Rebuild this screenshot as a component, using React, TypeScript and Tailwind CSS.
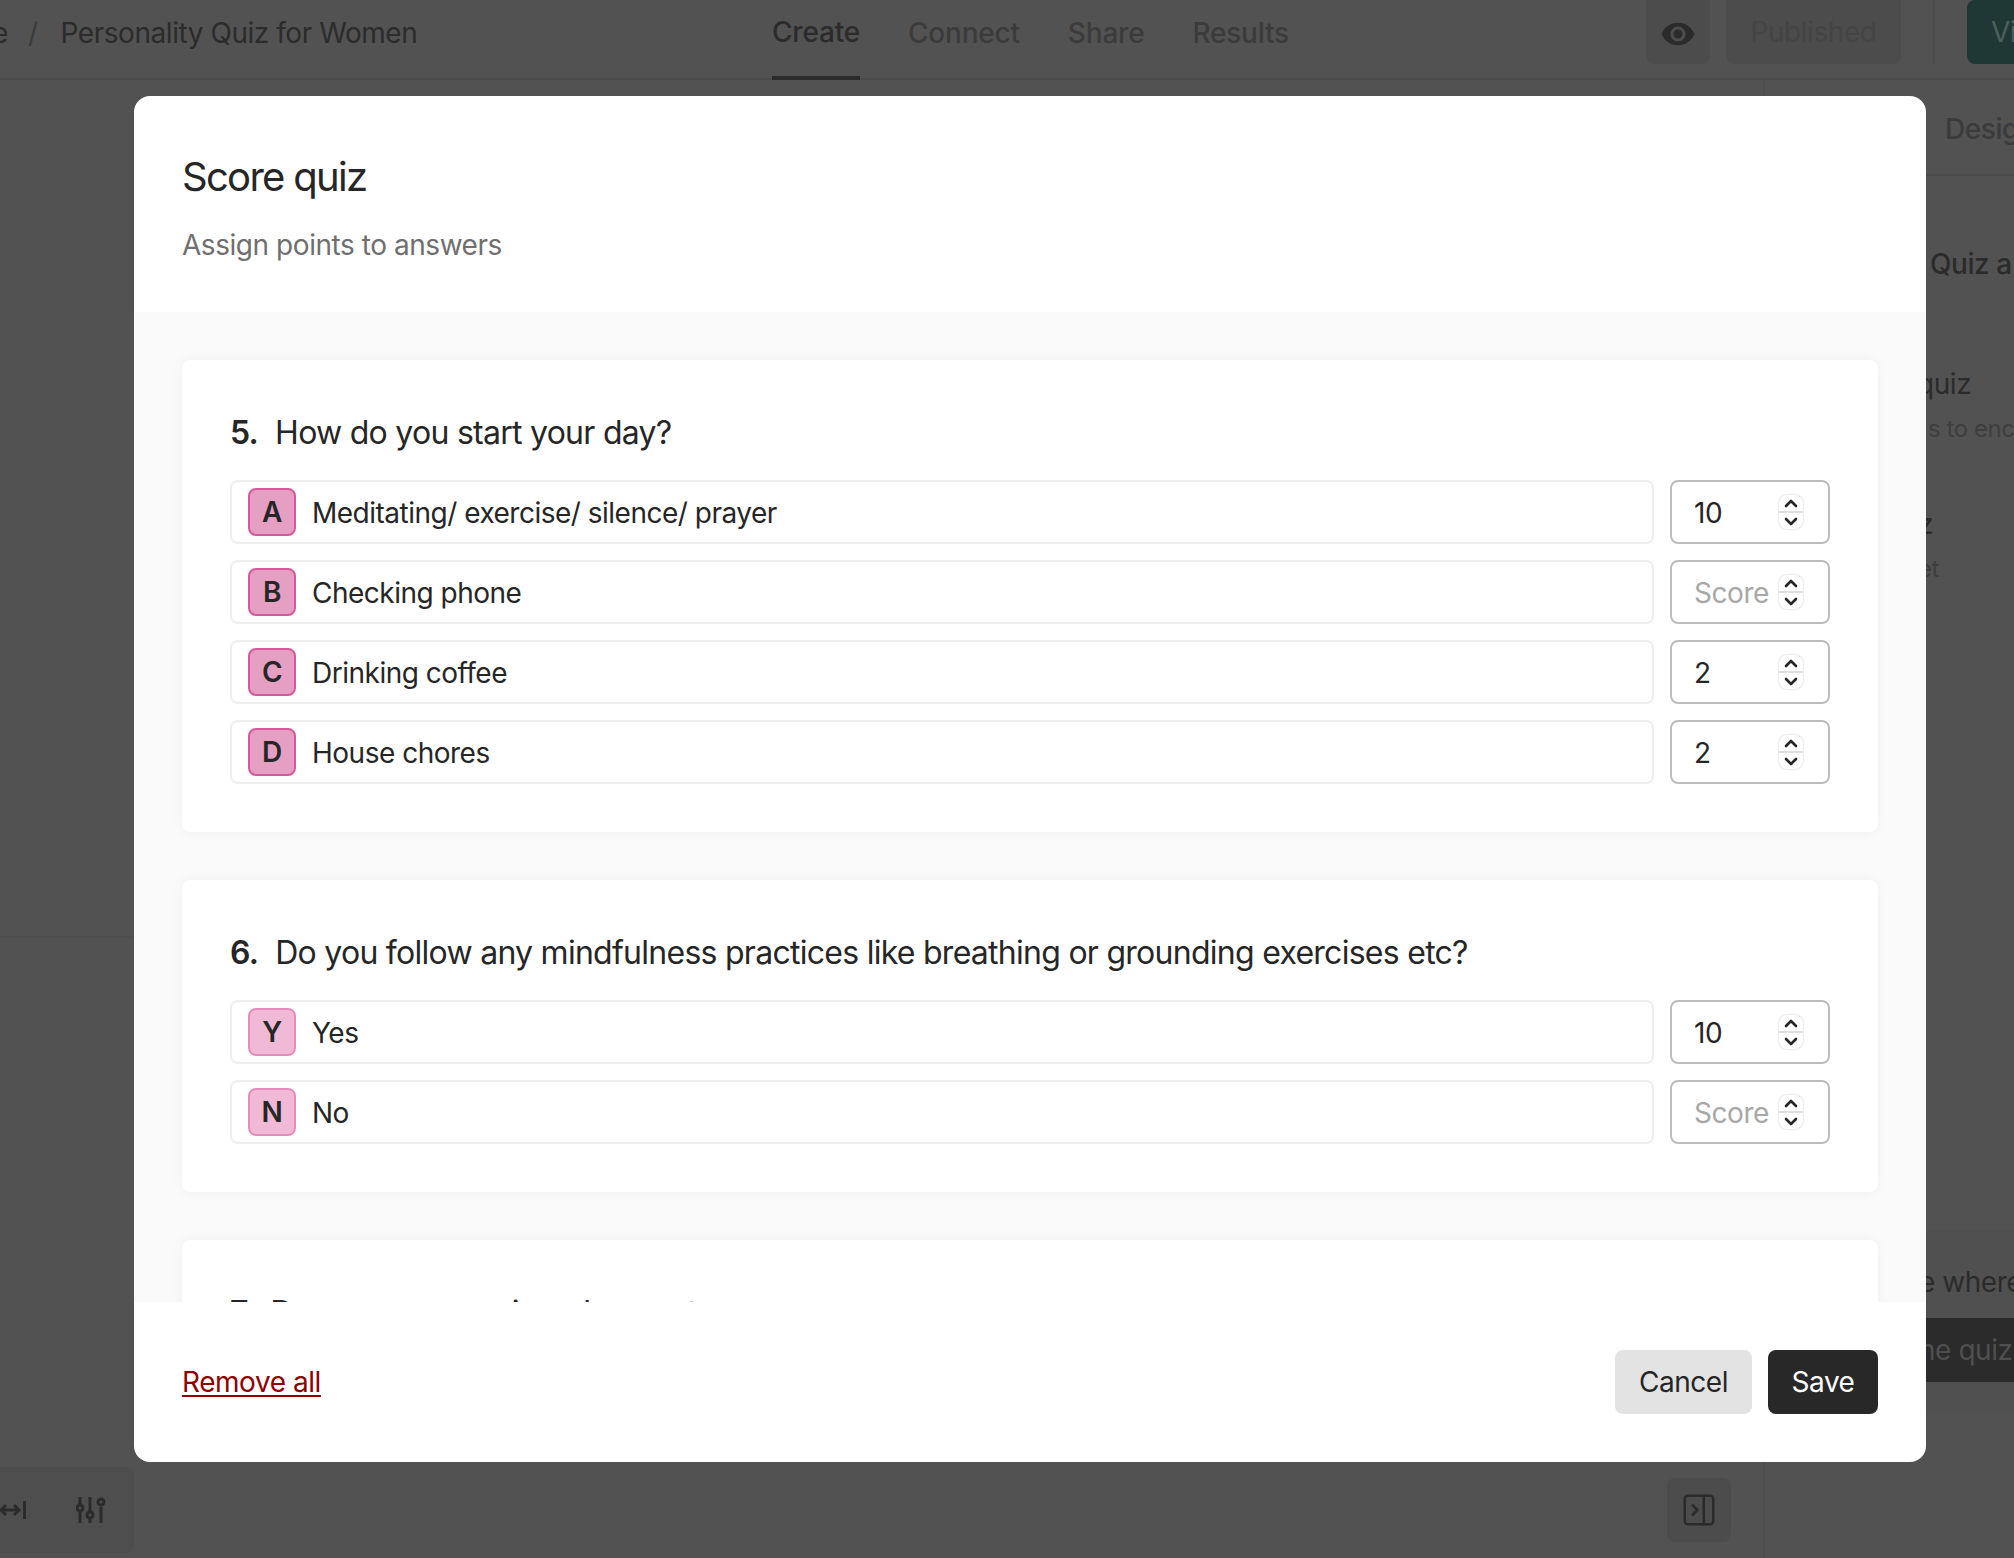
import { PanelRightClose } from "lucide-react"

const font = "font-['Inter','Liberation_Sans',sans-serif]"

type Answer = { key: string; label: string; score?: string }

const q5: Answer[] = [
  { key: "A", label: "Meditating/ exercise/ silence/ prayer", score: "10" },
  { key: "B", label: "Checking phone" },
  { key: "C", label: "Drinking coffee", score: "2" },
  { key: "D", label: "House chores", score: "2" },
]

const q6: Answer[] = [
  { key: "Y", label: "Yes", score: "10" },
  { key: "N", label: "No" },
]

function Stepper() {
  return (
    <div className="flex h-[34px] w-[24px] shrink-0 flex-col rounded-[8px] bg-white shadow-[0_0_2px_rgba(0,0,0,0.25)]">
      <div className="flex flex-1 items-center justify-center border-b-2 border-[#dedede]">
        <svg width="14" height="9" viewBox="0 0 14 9" fill="none" stroke="#262626" strokeWidth="2.6" strokeLinecap="round" strokeLinejoin="round">
          <path d="M2 7l5-5 5 5" />
        </svg>
      </div>
      <div className="flex flex-1 items-center justify-center">
        <svg width="14" height="9" viewBox="0 0 14 9" fill="none" stroke="#262626" strokeWidth="2.6" strokeLinecap="round" strokeLinejoin="round">
          <path d="M2 2l5 5 5-5" />
        </svg>
      </div>
    </div>
  )
}

function AnswerRow({ answer, light }: { answer: Answer; light?: boolean }) {
  return (
    <div className="flex gap-4">
      <div className="flex h-16 flex-1 items-center gap-4 rounded-[8px] border-2 border-[#eeeeee] pl-4">
        <div
          className={`flex h-12 w-12 items-center justify-center rounded-[8px] border-2 text-[28px] font-semibold text-[#262626] ${
            light ? "border-[#e38dbb] bg-[#f0b9d5]" : "border-[#d6589b] bg-[#e59fc3]"
          }`}
        >
          {answer.key}
        </div>
        <span className="pt-px text-[28px] tracking-[-0.5px] text-[#262626]">{answer.label}</span>
      </div>
      <div className="flex h-16 w-40 items-center justify-between rounded-[8px] border-2 border-[#bdbdbd] pl-[22px] pr-[25px]">
        {answer.score ? (
          <span className="pt-px text-[28px] text-[#262626]">{answer.score}</span>
        ) : (
          <span className="pt-[2px] text-[28px] text-[#a8a8a8]">Score</span>
        )}
        <Stepper />
      </div>
    </div>
  )
}

function QuestionCard({ num, title, answers, light }: { num: string; title: string; answers: Answer[]; light?: boolean }) {
  return (
    <div className="flex shrink-0 flex-col gap-4 rounded-[8px] bg-white p-12 shadow-[0_0_12px_rgba(0,0,0,0.05)]">
      <h3 className="mb-[6px] flex h-[50px] items-center gap-[17px] text-[32px] tracking-[-0.73px] text-[#262626]">
        <span className="font-semibold">{num}</span>
        <span>{title}</span>
      </h3>
      {answers.map((a) => (
        <AnswerRow key={a.key} answer={a} light={light} />
      ))}
    </div>
  )
}

function TopBar() {
  return (
    <header className="flex h-20 items-start justify-between border-b-2 border-[#4b4b4b]">
      <div className="flex h-[66px] w-[772px] items-center text-[28px] text-[#2b2b2b]">
        <span className="-ml-[8px] text-[#2b2b2b]">e</span>
        <span className="ml-[20px] text-[#3a3a3a]">/</span>
        <span className="ml-[23px]">Personality Quiz for Women</span>
      </div>
      <nav className="flex h-20 gap-12 text-[28px] font-medium tracking-[-0.2px] text-[#3b3b3b]">
        <span className="flex h-20 items-center border-b-4 border-[#2b2b2b] pb-[12px] text-[#2b2b2b]">Create</span>
        <span className="flex h-20 items-center pb-[14px]">Connect</span>
        <span className="flex h-20 items-center pb-[14px]">Share</span>
        <span className="flex h-20 items-center pb-[14px]">Results</span>
      </nav>
      <div className="flex h-16 flex-1 justify-end">
        <div className="flex h-16 w-16 items-center justify-center rounded-b-[8px] bg-[#4c4c4c] pt-[3px]">
          <svg width="36" height="36" viewBox="0 0 24 24" fill="#2b2b2b">
            <path d="M12 4.5C7 4.5 2.73 7.61 1 12c1.73 4.39 6 7.5 11 7.5s9.27-3.11 11-7.5c-1.73-4.39-6-7.5-11-7.5zM12 17c-2.76 0-5-2.24-5-5s2.24-5 5-5 5 2.24 5 5-2.24 5-5 5zm0-8c-1.66 0-3 1.34-3 3s1.34 3 3 3 3-1.34 3-3-1.34-3-3-3z" />
          </svg>
        </div>
        <div className="ml-4 flex h-16 w-[175px] items-center justify-center rounded-b-[8px] bg-[#4c4c4c] text-[28px] text-[#444444]">
          Published
        </div>
        <div className="ml-[32px] h-16 w-[2px] bg-[#4b4b4b]" />
        <div className="ml-[32px] flex h-16 w-[47px] items-center overflow-hidden rounded-l-[8px] bg-[#1f3836] pl-[24px] text-[28px] text-[#4d5f5d]">
          Vi
        </div>
      </div>
    </header>
  )
}

function SidePeek() {
  return (
    <aside className="flex h-full w-[251px] flex-col overflow-hidden whitespace-nowrap border-l-2 border-[#4e4e4e] pl-[165px] text-[#2b2b2b]">
      <div className="-ml-[165px] flex h-24 items-center border-b-2 border-[#4b4b4b] pl-[180px] pt-[4px] text-[28px] font-medium text-[#3b3b3b]">
        Desig
      </div>
      <div className="mt-[68px] text-[28px] font-medium leading-[40px]">Quiz a</div>
      <div className="-ml-[13px] mt-[80px] text-[28px] leading-[40px]">quiz</div>
      <div className="-ml-[2px] mt-[7px] text-[24px] leading-[36px] text-[#3e3e3e]">s to enc</div>
      <div className="-ml-[12px] mt-[57px] text-[28px] font-medium leading-[40px]">z</div>
      <div className="-ml-[12px] mt-[8px] text-[24px] leading-[34px] text-[#3e3e3e]">et</div>
      <div className="-ml-[165px] mt-[644px] bg-[#505050] pb-[31px] pl-[154px] pt-[32px]">
        <div className="text-[28px] leading-[40px]">e where</div>
        <div className="mt-[16px] flex h-16 items-center bg-[#2b2b2b] text-[28px] text-[#4f4f4f]">ne quiz</div>
      </div>
    </aside>
  )
}

export default function App() {
  return (
    <div className={`${font} relative h-[1558px] w-[2014px] overflow-hidden bg-[#525252] tracking-[-0.45px]`}>
      <TopBar />
      <div className="flex h-[1478px]">
        <main className="flex flex-1 flex-col justify-between">
          <div className="h-[858px] w-[134px] border-b-2 border-[#4e4e4e]" />
          <div className="flex items-end justify-between pb-[5px]">
            <div className="flex h-[86px] w-[134px] items-center gap-[50px] rounded-r-[8px] bg-[#4e4e4e] text-[#2b2b2b]">
              <svg width="26" height="20" viewBox="0 0 26 20" fill="none" stroke="currentColor" strokeWidth="3">
                <path d="M1 10h18M6 5l-5 5 5 5M14 5l5 5-5 5" />
                <path d="M24.5 1v18" />
              </svg>
              <svg width="30" height="26" viewBox="0 0 30 26" fill="none" stroke="currentColor" strokeWidth="3">
                <path d="M4 0v8M4 15v11M14 0v14M14 21v5M25 10v16" />
                <circle cx="4" cy="11" r="3" />
                <circle cx="14" cy="18" r="3" />
                <circle cx="25" cy="5" r="3" />
              </svg>
            </div>
            <div className="mb-[11px] mr-[32px] flex h-16 w-16 items-center justify-center rounded-[8px] bg-[#4c4c4c] text-[#2b2b2b]">
              <PanelRightClose size={38} strokeWidth={1.6} />
            </div>
          </div>
        </main>
        <SidePeek />
      </div>

      <div className="absolute left-[134px] top-[96px] flex h-[1366px] w-[1792px] flex-col overflow-hidden rounded-[16px] bg-white">
        <div className="flex h-[216px] shrink-0 flex-col px-12 pt-[59px]">
          <h2 className="text-[40px] leading-[44px] tracking-[-1.7px] text-[#262626]">Score quiz</h2>
          <p className="mt-[26px] text-[28px] leading-[40px] text-[#6f6f6f]">Assign points to answers</p>
        </div>
        <div className="flex flex-1 flex-col gap-12 overflow-hidden bg-[#fafafa] p-12">
          <QuestionCard num="5." title="How do you start your day?" answers={q5} />
          <QuestionCard num="6." title="Do you follow any mindfulness practices like breathing or grounding exercises etc?" answers={q6} light />
          <QuestionCard num="7." title="Do you sense pain or burnout" answers={[]} light />
        </div>
        <div className="flex h-[160px] shrink-0 items-center justify-between px-12">
          <a className="text-[28px] text-[#8f0000] underline decoration-2 underline-offset-[3px]">Remove all</a>
          <div className="flex gap-4">
            <button className="flex h-16 w-[137px] items-center justify-center rounded-[8px] bg-[#e3e3e3] text-[28px] text-[#262626]">Cancel</button>
            <button className="flex h-16 w-[110px] items-center justify-center rounded-[8px] bg-[#282828] text-[28px] text-white">Save</button>
          </div>
        </div>
      </div>
    </div>
  )
}
